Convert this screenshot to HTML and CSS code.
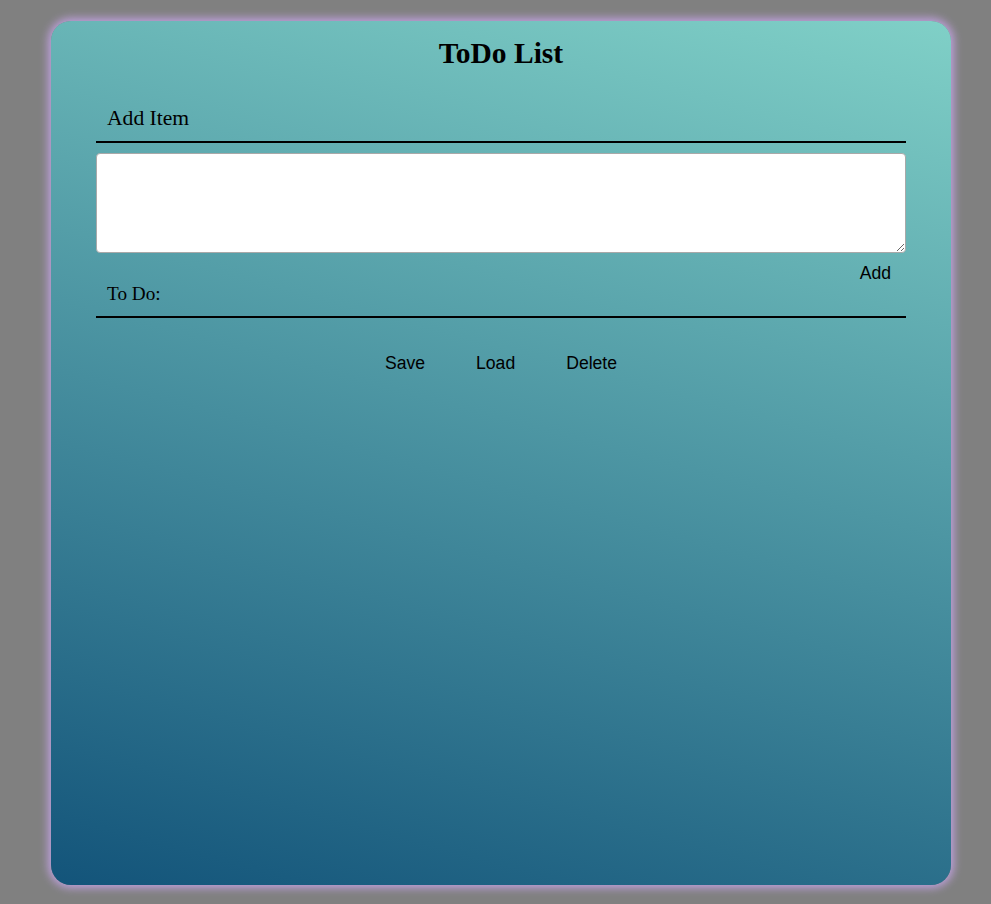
FILE: index.html
```html
<!DOCTYPE html>
<html>
<head>
<meta charset="utf-8">
<title>ToDo List</title>
<link rel="stylesheet" href="styles.css">
</head>
<body>
<div class="card">
  <h1 class="title">ToDo List</h1>
  <h2 class="section add-head">Add Item</h2>
  <textarea class="entry"></textarea>
  <div class="add-row"><button class="btn">Add</button></div>
  <h3 class="section todo-head">To Do:</h3>
  <ul class="list"></ul>
  <div class="actions">
    <button class="btn">Save</button>
    <button class="btn">Load</button>
    <button class="btn">Delete</button>
  </div>
</div>
</body>
</html>
```
FILE: styles.css
```css
html, body {
  margin: 0;
  padding: 0;
}
body {
  background: #808080;
  height: 904px;
  overflow: hidden;
  padding-top: 21px;
  padding-left: 51px;
  box-sizing: border-box;
}
.card {
  width: 900px;
  height: 864px;
  box-sizing: border-box;
  border-radius: 20px;
  background: linear-gradient(15deg, #13547a 0%, #80d0c7 100%);
  box-shadow: 0 0 8px 3px rgba(200, 165, 235, 0.85);
  padding: 16px 45px 0 45px;
  font-family: "Liberation Serif", "Times New Roman", serif;
}
.title {
  margin: 0;
  font-size: 29.5px;
  line-height: 32px;
  font-weight: bold;
  text-align: center;
  color: #000;
}
.section {
  margin: 0;
  font-weight: normal;
  color: #000;
  border-bottom: 2px solid #000;
  padding-left: 11px;
}
.add-head {
  margin-top: 37px;
  font-size: 21.6px;
  line-height: 24px;
  padding-bottom: 11px;
}
.entry {
  display: block;
  width: 100%;
  height: 100px;
  box-sizing: border-box;
  margin: 10px 0 0 0;
  border: 1px solid #a9a9a9;
  border-radius: 4px;
  background: #fff;
}
.add-row {
  display: flex;
  justify-content: flex-end;
  margin-top: 10px;
}
.btn {
  background: transparent;
  border: none;
  margin: 0;
  padding: 0;
  font-family: "Liberation Sans", Arial, sans-serif;
  font-size: 17.6px;
  line-height: 20px;
  color: #000;
  cursor: pointer;
}
.add-row .btn {
  padding: 0 15px;
}
.todo-head {
  font-size: 19.2px;
  line-height: 22px;
  padding-bottom: 11px;
  margin-top: 0;
}
.list {
  margin: 0;
  padding: 0;
  list-style: none;
}
.actions {
  display: flex;
  justify-content: center;
  gap: 51px;
  margin-top: 35px;
}
```
